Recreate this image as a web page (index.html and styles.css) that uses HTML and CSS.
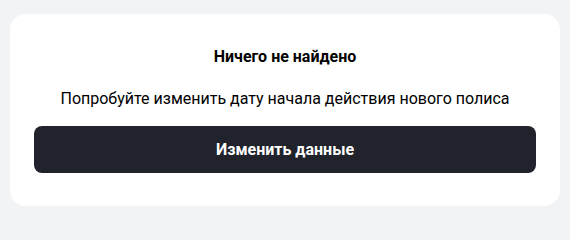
FILE: index.html
```html
<!DOCTYPE html>
<html lang="ru">
<head>
<meta charset="utf-8">
<link rel="stylesheet" href="styles.css">
</head>
<body>
<div class="card">
  <div class="title">Ничего не найдено</div>
  <div class="text">Попробуйте изменить дату начала действия нового полиса</div>
  <button class="btn">Изменить данные</button>
</div>
</body>
</html>
```
FILE: styles.css
```css
html, body {
  margin: 0;
  padding: 0;
}
body {
  background: #f2f3f5;
  font-family: Roboto, "Noto Sans", sans-serif;
  color: #000;
  padding: 14px 10px 12px;
}
.card {
  background: #fff;
  border-radius: 16px;
  padding: 33px 24px 33px;
  display: flex;
  flex-direction: column;
  align-items: stretch;
}
.title {
  font-size: 16px;
  font-weight: 700;
  line-height: 20px;
  text-align: center;
}
.text {
  margin-top: 22px;
  font-size: 16px;
  line-height: 20px;
  text-align: center;
}
.btn {
  margin-top: 17px;
  height: 47px;
  border: none;
  border-radius: 8px;
  background: #20232c;
  color: #fff;
  font-family: Roboto, "Noto Sans", sans-serif;
  font-size: 16px;
  font-weight: 700;
}
```
